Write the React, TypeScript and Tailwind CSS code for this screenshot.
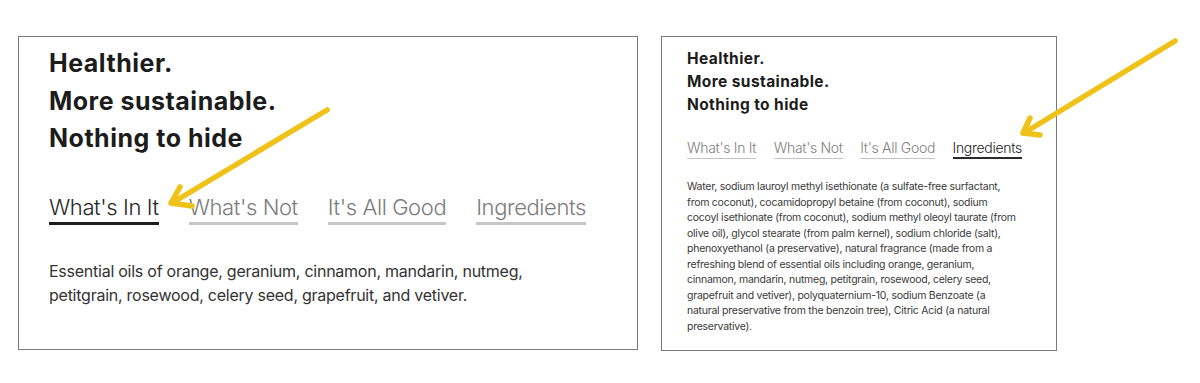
const tabs = ["What's In It", "What's Not", "It's All Good", 'Ingredients']

const ingredientLines = [
  'Water, sodium lauroyl methyl isethionate (a sulfate-free surfactant,',
  'from coconut), cocamidopropyl betaine (from coconut), sodium',
  'cocoyl isethionate (from coconut), sodium methyl oleoyl taurate (from',
  'olive oil), glycol stearate (from palm kernel), sodium chloride (salt),',
  'phenoxyethanol (a preservative), natural fragrance (made from a',
  'refreshing blend of essential oils including orange, geranium,',
  'cinnamon, mandarin, nutmeg, petitgrain, rosewood, celery seed,',
  'grapefruit and vetiver), polyquaternium-10, sodium Benzoate (a',
  'natural preservative from the benzoin tree), Citric Acid (a natural',
  'preservative).',
]

function Heading({ size }: { size: 'lg' | 'sm' }) {
  const cls =
    size === 'lg'
      ? 'text-[25px] leading-[37.5px] font-bold tracking-[0.5px]'
      : 'text-[15.5px] leading-[23px] font-bold tracking-[0.4px]'
  return (
    <h2 className={`${cls} text-[#1c1c1c]`}>
      Healthier.
      <br />
      More sustainable.
      <br />
      Nothing to hide
    </h2>
  )
}

function BigPanel() {
  return (
    <div className="h-[314px] w-[620px] border border-[#7a7a7a] pl-[30px] pt-[8px]">
      <Heading size="lg" />
      <ul className="mt-[35px] flex gap-[30px]">
        {tabs.map((t, i) => (
          <li
            key={t}
            className={`border-b-[3px] pb-[1px] text-[22px] leading-[28px] font-light tracking-[-0.4px] ${
              i === 0 ? 'border-[#1e1e1e] text-[#262626]' : 'border-[#c6c6c6] text-[#7b7b7b]'
            }`}
          >
            {t}
          </li>
        ))}
      </ul>
      <p className="mt-[34px] text-[16px] leading-[24px] tracking-[-0.25px] text-[#333]">
        Essential oils of orange, geranium, cinnamon, mandarin, nutmeg,
        <br />
        petitgrain, rosewood, celery seed, grapefruit, and vetiver.
      </p>
    </div>
  )
}

function SmallPanel() {
  return (
    <div className="h-[315px] w-[396px] border border-[#7a7a7a] pl-[25px] pt-[10px]">
      <Heading size="sm" />
      <ul className="mt-[23px] flex gap-[17.5px]">
        {tabs.map((t, i) => (
          <li
            key={t}
            className={`text-[14px] leading-[18px] font-light tracking-[-0.3px] ${
              i === 3
                ? 'border-b-2 border-[#2a2a2a] text-[#222]'
                : 'border-b border-[#c4c4c4] pb-[1px] text-[#808080]'
            }`}
          >
            {t}
          </li>
        ))}
      </ul>
      <p className="mt-[20px] text-[10.5px] leading-[15.5px] tracking-[-0.25px] text-[#3a3a3a]">
        {ingredientLines.map((l) => (
          <span key={l} className="block whitespace-nowrap">
            {l}
          </span>
        ))}
      </p>
    </div>
  )
}

function Arrows() {
  return (
    <svg
      className="pointer-events-none absolute inset-0"
      width="1200"
      height="383"
      viewBox="0 0 1200 383"
      fill="none"
    >
      <g stroke="#efc21a" strokeWidth="5.5" strokeLinecap="round" strokeLinejoin="round">
        <path d="M327 110 L172 203" />
        <path d="M180 187 L171 203 L192 206" />
        <path d="M1175 41 L1024 133" />
        <path d="M1030 118 L1023 133 L1040 135" />
      </g>
    </svg>
  )
}

export default function App() {
  return (
    <div className="relative h-[383px] w-[1200px] overflow-hidden bg-white font-['Inter','Liberation_Sans',sans-serif]">
      <div className="flex gap-[23px] pl-[18px] pt-[36px]">
        <BigPanel />
        <SmallPanel />
      </div>
      <Arrows />
    </div>
  )
}
